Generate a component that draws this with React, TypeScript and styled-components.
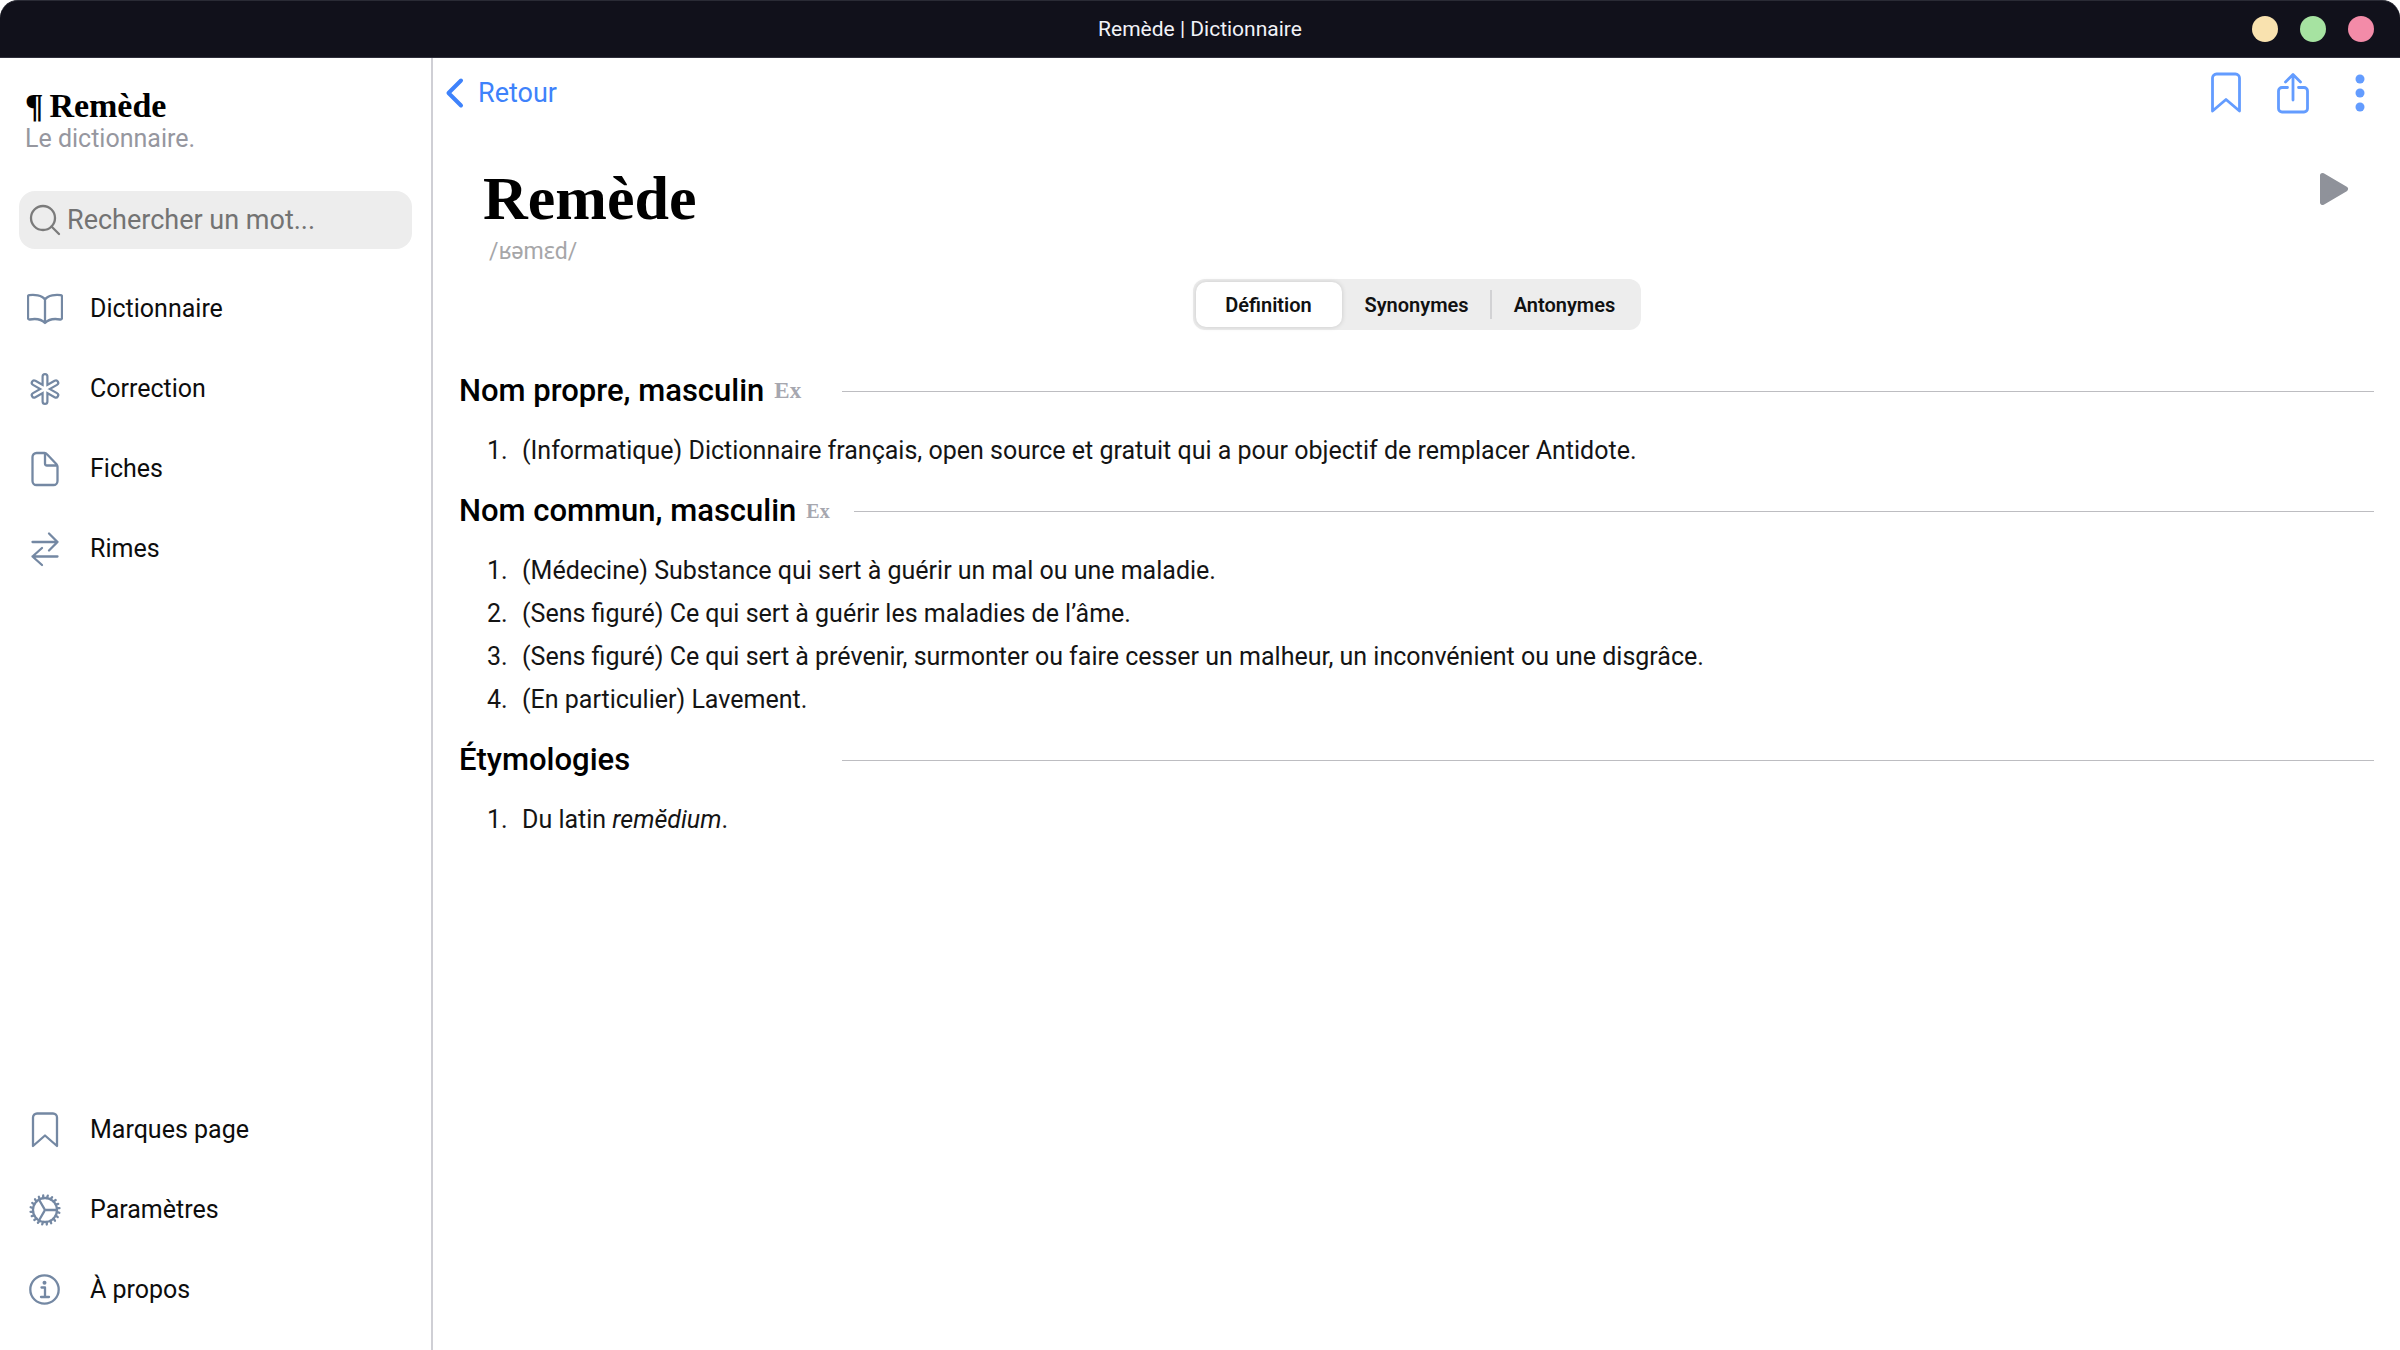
import React, { useState } from "react";
import styled, { createGlobalStyle } from "styled-components";

const sans = `Roboto, "Noto Sans", sans-serif`;
const serif = `"Liberation Serif", "Noto Serif", serif`;

const GlobalStyle = createGlobalStyle`
  *, *::before, *::after { box-sizing: border-box; }
  html, body, #root { height: 100%; }
  body { margin: 0; background: #fff; color: #000; font-family: ${sans}; }
  button { margin: 0; padding: 0; border: 0; background: none; font: inherit; color: inherit; cursor: pointer; }
  svg { display: block; flex-shrink: 0; }
`;

const Window = styled.div`
  min-height: 100%;
  display: flex;
  flex-direction: column;
`;

const TitleBar = styled.header`
  display: grid;
  grid-template-columns: 1fr auto 1fr;
  align-items: center;
  height: 58px;
  padding: 0 26px;
  background: #11111b;
  border-top: 1px solid #2a2b35;
  border-bottom: 1px solid #2f2f3b;
  border-radius: 18px 18px 0 0;
`;

const WindowTitle = styled.h1`
  grid-column: 2;
  margin: 0;
  color: #f2f3f8;
  font-size: 21px;
  font-weight: 400;
  line-height: 24px;
`;

const WindowButtons = styled.div`
  display: flex;
  justify-content: flex-end;
  gap: 22px;
`;

const WindowButton = styled.button<{ $color: string }>`
  width: 26px;
  height: 26px;
  border-radius: 50%;
  background: ${(p) => p.$color};
`;

const Body = styled.div`
  flex: 1;
  display: flex;
`;

const Sidebar = styled.aside`
  flex: 0 0 433px;
  min-width: 0;
  display: flex;
  flex-direction: column;
  padding: 30px 19px 20px;
  border-right: 2px solid #cfcfd5;
`;

const Brand = styled.div`
  padding: 0 6px;
`;

const BrandName = styled.div`
  display: flex;
  align-items: center;
  gap: 6px;
  font: bold 34px/36px ${serif};
`;

const Tagline = styled.div`
  color: #96979f;
  font-size: 25px;
  line-height: 30px;
`;

const SearchBox = styled.label`
  display: flex;
  align-items: center;
  gap: 6px;
  height: 58px;
  margin: 37px 0 20px;
  padding: 0 10px;
  border-radius: 16px;
  background: #ededed;
  color: #7b7b7b;
`;

const SearchInput = styled.input`
  flex: 1;
  width: 100%;
  min-width: 0;
  padding: 0;
  border: 0;
  outline: 0;
  background: none;
  color: #000;
  font: 27px/32px ${sans};
  &::placeholder { color: #737373; opacity: 1; }
`;

const Nav = styled.nav<{ $bottom?: boolean }>`
  display: flex;
  flex-direction: column;
  margin-top: ${(p) => (p.$bottom ? "auto" : "0")};
`;

const NavLink = styled.a`
  display: flex;
  align-items: center;
  gap: 27px;
  height: 80px;
  padding-left: 8px;
  color: #0d0d0d;
  font-size: 25px;
  line-height: 30px;
  text-decoration: none;
  svg { color: #7488a3; }
`;

const Main = styled.main`
  flex: 1;
  min-width: 0;
  display: flex;
  flex-direction: column;
`;

const Toolbar = styled.div`
  display: flex;
  justify-content: space-between;
  align-items: center;
  height: 70px;
  padding: 0 24px 0 10px;
`;

const BackButton = styled.button`
  display: flex;
  align-items: center;
  gap: 13px;
  color: #3e82fb;
  font-size: 27px;
  line-height: 32px;
`;

const Actions = styled.div`
  display: flex;
  gap: 35px;
  color: #639cff;
`;

const WordHeader = styled.div`
  display: flex;
  justify-content: space-between;
  align-items: flex-start;
  padding: 34px 50px 0;
`;

const Word = styled.h2`
  margin: 0;
  font: bold 62px/72px ${serif};
`;

const Phonetic = styled.div`
  padding: 3px 6px 0;
  color: #a6a6a8;
  font-size: 23px;
  line-height: 30px;
`;

const PlayButton = styled.button`
  margin-top: 9px;
  color: #8f929a;
`;

const Tabs = styled.div`
  align-self: center;
  display: flex;
  align-items: center;
  height: 51px;
  margin-top: 12px;
  padding: 3px;
  border-radius: 12px;
  background: #ededed;
`;

const Tab = styled.button<{ $active: boolean }>`
  width: 146px;
  height: 45px;
  border-radius: 10px;
  color: #111;
  font-size: 20px;
  line-height: 24px;
  font-weight: 600;
  background: ${(p) => (p.$active ? "#fff" : "transparent")};
  box-shadow: ${(p) => (p.$active ? "0 0 5px rgba(0, 0, 0, 0.16)" : "none")};
`;

const TabDivider = styled.span<{ $visible: boolean }>`
  width: 2px;
  height: 29px;
  background: ${(p) => (p.$visible ? "#d2d2d4" : "transparent")};
`;

const Entries = styled.div`
  padding: 33px 26px;
`;

const SectionHeader = styled.div`
  display: flex;
  align-items: center;
  gap: 24px;
  height: 56px;
`;

const SectionLabel = styled.div`
  display: flex;
  align-items: center;
  gap: 10px;
  min-width: 359px;
`;

const SectionTitle = styled.h3`
  margin: 0;
  font-size: 31px;
  line-height: 40px;
  font-weight: 500;
`;

const ExampleButton = styled.button<{ $small?: boolean }>`
  color: #a6a7af;
  font: bold ${(p) => (p.$small ? 20 : 23)}px/28px ${serif};
`;

const Rule = styled.hr`
  flex: 1;
  height: 0;
  margin: 0;
  border: 0;
  border-top: 1px solid #bdbdc1;
`;

const Definitions = styled.ol`
  margin: 0;
  padding: 10px 0 11px 28px;
  list-style: none;
  counter-reset: def;
`;

const Definition = styled.li`
  display: flex;
  counter-increment: def;
  color: #141414;
  font-size: 25px;
  line-height: 43px;
  &::before {
    content: counter(def) ".";
    flex: 0 0 35px;
  }
`;

type IconProps = { width?: number; height?: number; weight?: number; children: React.ReactNode };

const Icon = ({ width = 36, height = 36, weight = 2.3, children }: IconProps) => (
  <svg
    width={width}
    height={height}
    viewBox={`0 0 ${width} ${height}`}
    fill="none"
    stroke="currentColor"
    strokeWidth={weight}
    strokeLinecap="round"
    strokeLinejoin="round"
    aria-hidden="true"
  >
    {children}
  </svg>
);

const BookIcon = () => (
  <Icon>
    <path d="M18 8.5C15 4 7 3.5 2.200 4.200a1.500 1.500 0 0 0-1.200 1.500V27a1.600 1.600 0 0 0 1.800 1.500C8 27.500 14 27.800 18 32c4-4.200 10-4.500 15.200-3.500A1.600 1.600 0 0 0 35 27V5.700a1.500 1.500 0 0 0-1.200-1.500C29 3.500 21 4 18 8.500ZM18 8.500V31" />
  </Icon>
);

const ARMS = "M18 5.500V30.500M7.200 11.800 28.800 24.200M28.800 11.800 7.200 24.200";

const AsteriskIcon = () => (
  <Icon>
    <path d={ARMS} strokeWidth={7} />
    <path d={ARMS} strokeWidth={2.6} stroke="#fff" />
  </Icon>
);

const FileIcon = () => (
  <Icon>
    <path d="M17.500 2H9.500A4 4 0 0 0 5.500 6V30A4 4 0 0 0 9.500 34H26.500A4 4 0 0 0 30.500 30V15.500C30.500 14.500 30 13.800 29.300 13L20 3.200C19.300 2.400 18.500 2 17.500 2ZM18 2.500V12.500A2 2 0 0 0 20 14.500H30" />
  </Icon>
);

const SwapIcon = () => (
  <Icon>
    <path d="M5.500 11H30.500M22 2.500 30.500 11 22 19.500M30.500 25.500H5.500M15 17 5.500 25.500 15 34" />
  </Icon>
);

const BookmarkIcon = () => (
  <Icon>
    <path d="M6 34V5.500A4 4 0 0 1 10 1.500H26A4 4 0 0 1 30 5.500V34L18 23.500Z" />
  </Icon>
);

const polar = (radius: number, degrees: number) => {
  const a = (degrees * Math.PI) / 180;
  return `${(18 + radius * Math.cos(a)).toFixed(2)} ${(18 + radius * Math.sin(a)).toFixed(2)}`;
};

const GearIcon = () => (
  <Icon>
    <circle cx="18" cy="18" r="12" />
    {Array.from({ length: 20 }, (_, i) => (
      <path key={i} d={`M${polar(12, i * 18 + 9)}L${polar(14.6, i * 18 + 11)}`} />
    ))}
    {[0, 120, 240].map((a) => (
      <path key={a} d={`M${polar(1, a)}L${polar(11, a)}`} />
    ))}
  </Icon>
);

const InfoIcon = () => (
  <Icon>
    <circle cx="17.500" cy="17.500" r="14.200" />
    <circle cx="17.500" cy="10.700" r="2" fill="currentColor" stroke="none" />
    <path d="M14.500 15.500H18V24.500M14 25H22" />
  </Icon>
);

const SearchIcon = () => (
  <Icon width={32} height={32}>
    <circle cx="14" cy="14" r="12" />
    <path d="M22.500 22.500 30 30" />
  </Icon>
);

const BackIcon = () => (
  <Icon width={22} height={32} weight={4}>
    <path d="M18 3.500 5.500 16 18 28.500" />
  </Icon>
);

const BookmarkLargeIcon = () => (
  <Icon width={32} height={44} weight={2.8}>
    <path d="M2.500 40V7A4 4 0 0 1 6.500 3H25.500A4 4 0 0 1 29.500 7V40L16 28.500Z" />
  </Icon>
);

const ShareIcon = () => (
  <Icon width={32} height={44} weight={2.8}>
    <path d="M10.500 16.500H5A3.500 3.500 0 0 0 1.500 20V37.500A3.500 3.500 0 0 0 5 41H27A3.500 3.500 0 0 0 30.500 37.500V20A3.500 3.500 0 0 0 27 16.500H21.500M16 29V4M8.500 11 16 3.500 23.500 11" />
  </Icon>
);

const MoreIcon = () => (
  <svg width="32" height="44" viewBox="0 0 32 44" fill="currentColor" aria-hidden="true">
    <circle cx="16" cy="8" r="4.500" />
    <circle cx="16" cy="22" r="4.500" />
    <circle cx="16" cy="36" r="4.500" />
  </svg>
);

const PlayIcon = () => (
  <svg width="32" height="36" viewBox="0 0 32 36" fill="currentColor" stroke="currentColor" strokeWidth="5" strokeLinejoin="round" aria-hidden="true">
    <path d="M4.500 4.500 27.500 18 4.500 31.500Z" />
  </svg>
);

const topLinks = [
  { label: "Dictionnaire", icon: <BookIcon /> },
  { label: "Correction", icon: <AsteriskIcon /> },
  { label: "Fiches", icon: <FileIcon /> },
  { label: "Rimes", icon: <SwapIcon /> },
];

const bottomLinks = [
  { label: "Marques page", icon: <BookmarkIcon /> },
  { label: "Paramètres", icon: <GearIcon /> },
  { label: "À propos", icon: <InfoIcon /> },
];

const sections = [
  {
    title: "Nom propre, masculin",
    example: "large",
    items: [
      "(Informatique) Dictionnaire français, open source et gratuit qui a pour objectif de remplacer Antidote.",
    ],
  },
  {
    title: "Nom commun, masculin",
    example: "small",
    items: [
      "(Médecine) Substance qui sert à guérir un mal ou une maladie.",
      "(Sens figuré) Ce qui sert à guérir les maladies de l’âme.",
      "(Sens figuré) Ce qui sert à prévenir, surmonter ou faire cesser un malheur, un inconvénient ou une disgrâce.",
      "(En particulier) Lavement.",
    ],
  },
  {
    title: "Étymologies",
    items: [
      <>
        Du latin <em>remĕdium</em>.
      </>,
    ],
  },
];

const tabs = ["Définition", "Synonymes", "Antonymes"];

export default function App() {
  const [active, setActive] = useState(0);

  return (
    <Window>
      <GlobalStyle />
      <TitleBar>
        <WindowTitle>Remède | Dictionnaire</WindowTitle>
        <WindowButtons>
          <WindowButton $color="#f9e2af" aria-label="Réduire" />
          <WindowButton $color="#a6e3a1" aria-label="Agrandir" />
          <WindowButton $color="#f38ba8" aria-label="Fermer" />
        </WindowButtons>
      </TitleBar>
      <Body>
        <Sidebar>
          <Brand>
            <BrandName>
              <span>¶</span>
              <span>Remède</span>
            </BrandName>
            <Tagline>Le dictionnaire.</Tagline>
          </Brand>
          <SearchBox>
            <SearchIcon />
            <SearchInput type="search" placeholder="Rechercher un mot..." aria-label="Rechercher un mot" />
          </SearchBox>
          <Nav>
            {topLinks.map((l) => (
              <NavLink href="#" key={l.label}>
                {l.icon}
                <span>{l.label}</span>
              </NavLink>
            ))}
          </Nav>
          <Nav $bottom>
            {bottomLinks.map((l) => (
              <NavLink href="#" key={l.label}>
                {l.icon}
                <span>{l.label}</span>
              </NavLink>
            ))}
          </Nav>
        </Sidebar>
        <Main>
          <Toolbar>
            <BackButton>
              <BackIcon />
              <span>Retour</span>
            </BackButton>
            <Actions>
              <button aria-label="Ajouter aux marques page"><BookmarkLargeIcon /></button>
              <button aria-label="Partager"><ShareIcon /></button>
              <button aria-label="Plus"><MoreIcon /></button>
            </Actions>
          </Toolbar>
          <WordHeader>
            <div>
              <Word>Remède</Word>
              <Phonetic>/ʁəmɛd/</Phonetic>
            </div>
            <PlayButton aria-label="Écouter"><PlayIcon /></PlayButton>
          </WordHeader>
          <Tabs role="tablist">
            {tabs.map((t, i) => (
              <React.Fragment key={t}>
                {i > 0 && <TabDivider $visible={active !== i && active !== i - 1} />}
                <Tab role="tab" aria-selected={active === i} $active={active === i} onClick={() => setActive(i)}>
                  {t}
                </Tab>
              </React.Fragment>
            ))}
          </Tabs>
          <Entries>
            {sections.map((s) => (
              <section key={s.title}>
                <SectionHeader>
                  <SectionLabel>
                    <SectionTitle>{s.title}</SectionTitle>
                    {s.example && <ExampleButton $small={s.example === "small"}>Ex</ExampleButton>}
                  </SectionLabel>
                  <Rule />
                </SectionHeader>
                <Definitions>
                  {s.items.map((d, i) => (
                    <Definition key={i}>
                      <span>{d}</span>
                    </Definition>
                  ))}
                </Definitions>
              </section>
            ))}
          </Entries>
        </Main>
      </Body>
    </Window>
  );
}
